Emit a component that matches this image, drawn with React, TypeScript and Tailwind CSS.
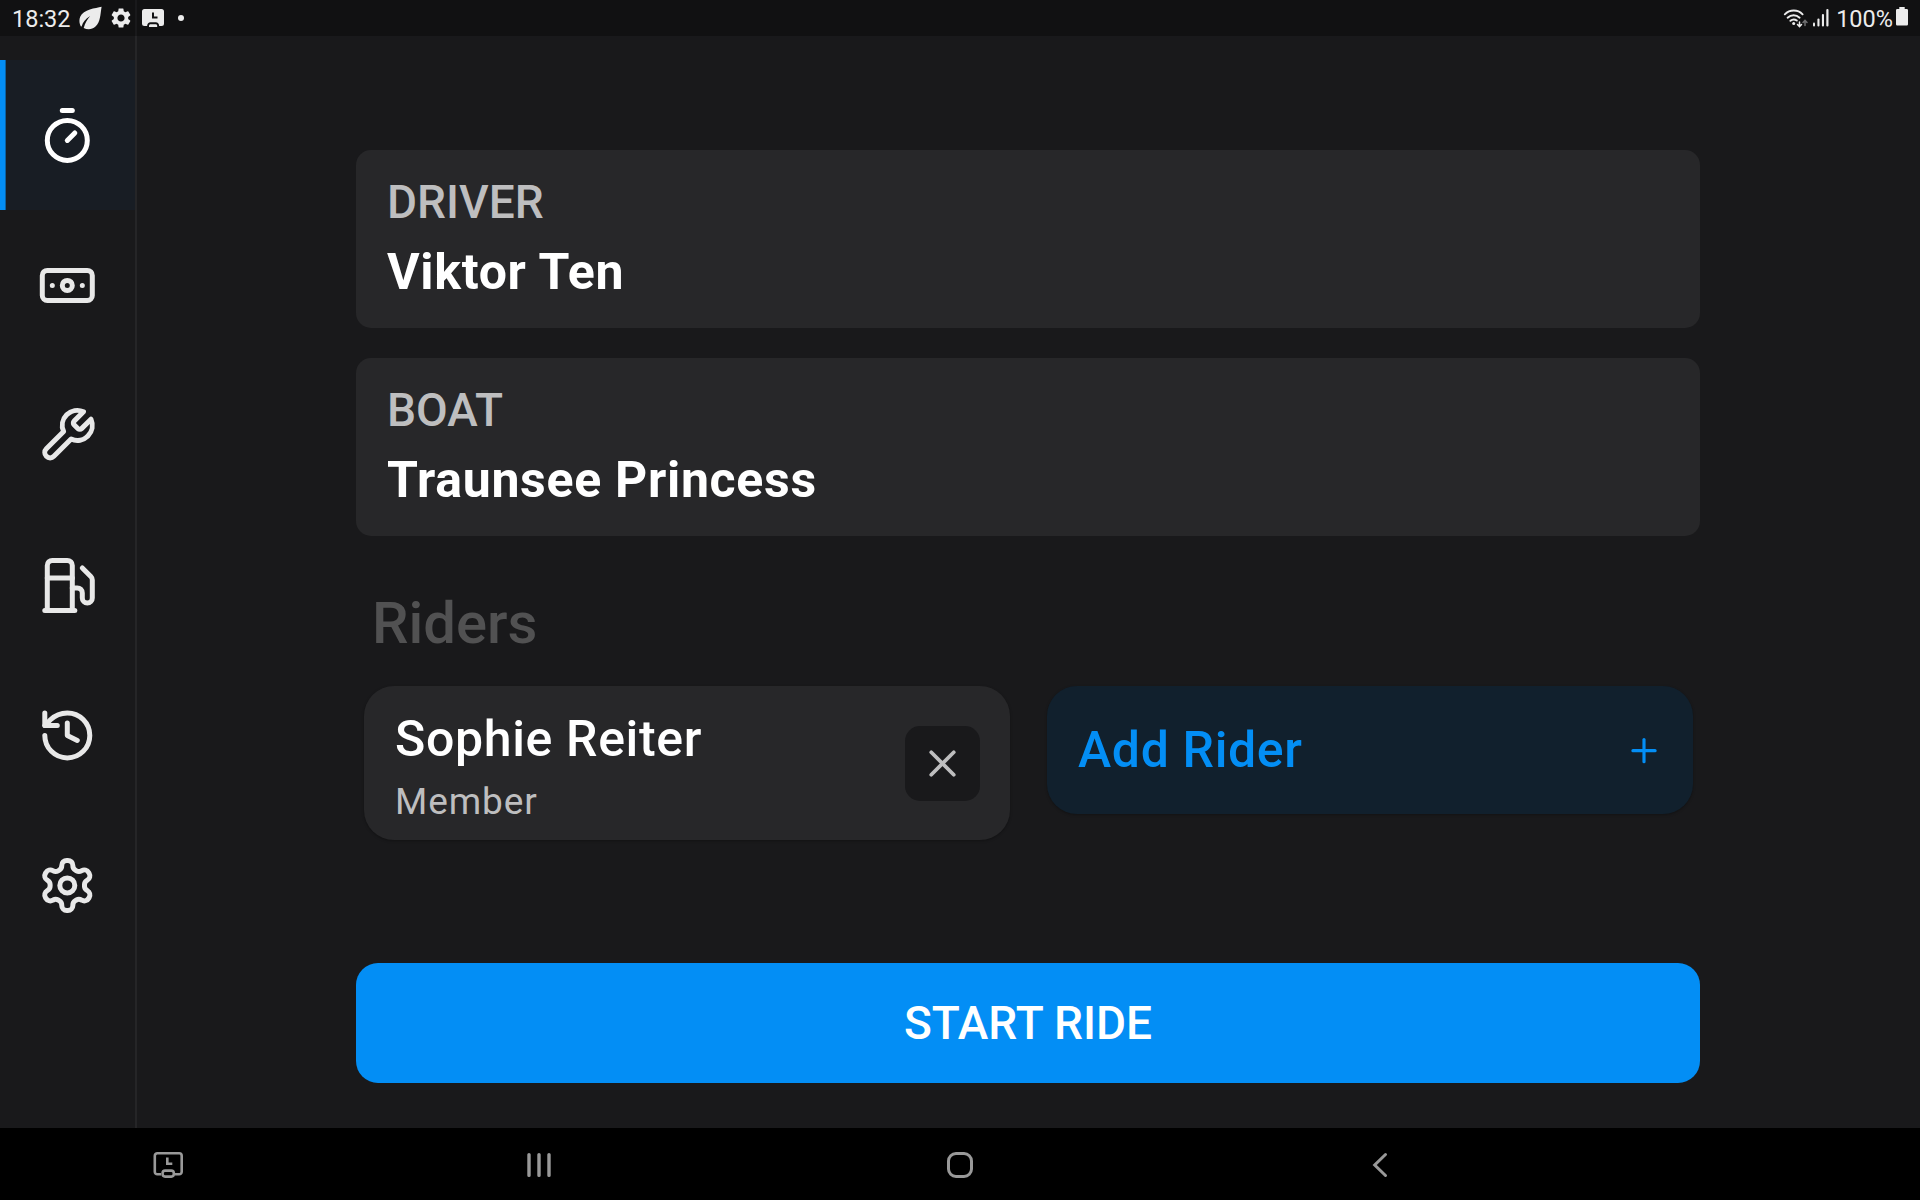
import React from 'react';
import { Banknote, History, Plus, Timer, X } from 'lucide-react';
import { MdSettings } from 'react-icons/md';

interface IconProps {
  className?: string;
}

const strokeProps = {
  viewBox: '0 0 24 24',
  fill: 'none',
  stroke: 'currentColor',
  strokeWidth: 2,
  strokeLinecap: 'round' as const,
  strokeLinejoin: 'round' as const,
};

const WrenchIcon: React.FC<IconProps> = ({ className }) => (
  <svg {...strokeProps} className={className}>
    <path d="M14.7 6.3a1 1 0 0 0 0 1.4l1.6 1.6a1 1 0 0 0 1.4 0l3.77-3.77a6 6 0 0 1-7.94 7.94l-6.91 6.91a2.12 2.12 0 0 1-3-3l6.91-6.91a6 6 0 0 1 7.94-7.94l-3.76 3.76z" />
  </svg>
);

const FuelIcon: React.FC<IconProps> = ({ className }) => (
  <svg {...strokeProps} className={className}>
    <path d="M3 22h12" />
    <path d="M4 9h10" />
    <path d="M14 22V4a2 2 0 0 0-2-2H6a2 2 0 0 0-2 2v18" />
    <path d="M14 13h2a2 2 0 0 1 2 2v2a2 2 0 0 0 2 2 2 2 0 0 0 2-2V9.83a2 2 0 0 0-.59-1.42L18 5" />
  </svg>
);

const GearIcon: React.FC<IconProps> = ({ className }) => (
  <svg {...strokeProps} className={className}>
    <path d="M12.22 2h-.44a2 2 0 0 0-2 2v.18a2 2 0 0 1-1 1.73l-.43.25a2 2 0 0 1-2 0l-.15-.08a2 2 0 0 0-2.73.73l-.22.38a2 2 0 0 0 .73 2.73l.15.1a2 2 0 0 1 1 1.72v.51a2 2 0 0 1-1 1.74l-.15.09a2 2 0 0 0-.73 2.73l.22.38a2 2 0 0 0 2.73.73l.15-.08a2 2 0 0 1 2 0l.43.25a2 2 0 0 1 1 1.73V20a2 2 0 0 0 2 2h.44a2 2 0 0 0 2-2v-.18a2 2 0 0 1 1-1.73l.43-.25a2 2 0 0 1 2 0l.15.08a2 2 0 0 0 2.73-.73l.22-.39a2 2 0 0 0-.73-2.73l-.15-.08a2 2 0 0 1-1-1.74v-.5a2 2 0 0 1 1-1.74l.15-.09a2 2 0 0 0 .73-2.73l-.22-.38a2 2 0 0 0-2.73-.73l-.15.08a2 2 0 0 1-2 0l-.43-.25a2 2 0 0 1-1-1.73V4a2 2 0 0 0-2-2z" />
    <circle cx="12" cy="12" r="3" />
  </svg>
);

const navIcon = 'size-[60px] translate-x-[0.3px] translate-y-[0.4px]';

const navItems = [
  { id: 'ride', icon: <Timer className={navIcon} />, active: true },
  { id: 'payments', icon: <Banknote className={navIcon} /> },
  { id: 'maintenance', icon: <WrenchIcon className={navIcon} /> },
  { id: 'fuel', icon: <FuelIcon className={navIcon} /> },
  { id: 'history', icon: <History className={navIcon} /> },
  { id: 'settings', icon: <GearIcon className={navIcon} /> },
];

const StatusBar = () => (
  <div className="absolute inset-x-0 top-0 flex h-9 items-center bg-black/30 pr-3 pl-3 text-[23.5px] leading-9 text-[#ececec]">
    <span className="w-[67px] pt-[2px]">18:32</span>
    {/* Power saving leaf */}
    <svg viewBox="0 0 24 24" className="size-6 fill-current">
      <path d="M22.6.8C16.5 2.3 4.5 3.2 1.2 10.8c-1.5 3.6-.7 7.6.9 9.9l.7-.7c1-3.6 3.6-7 8.4-10-2.9 3.3-5 6.800-6.500 11.900 3.600 2 8.200 1.900 11.800-1.300C21.500 16.200 21.200 9 22.600.8z" />
    </svg>
    <MdSettings className="ml-[6px] size-6" />
    {/* Screen timeout */}
    <svg viewBox="0 0 24 20" className="ml-2 h-5 w-6">
      <path className="fill-current" d="M3.5 1h17A2.5 2.5 0 0 1 23 3.5v12a2.5 2.5 0 0 1-2.5 2.5h-2.3c-.3-2.4-1.4-3.7-3.4-3.7H9.5c-2 0-3.1 1.3-3.4 3.7H3.5A2.5 2.5 0 0 1 1 15.500v-12A2.5 2.5 0 0 1 3.5 1z" />
      <path className="fill-current" d="M8 19v-1.2c0-1 .6-1.6 1.6-1.6h5c1 0 1.6.6 1.6 1.6V19z" />
      <path d="M12 4.5v5h4.500" fill="none" stroke="#111113" strokeWidth="2" />
    </svg>
    <span className="ml-[13px] size-[6px] rounded-full bg-current" />

    <div className="ml-auto flex items-center">
      <svg viewBox="0 0 26 22" className="h-[22px] w-[26px]" fill="none" stroke="currentColor" strokeLinecap="round">
        <path d="M1.8 7.300c5-5 13-5 17.800 0" strokeWidth="1.9" />
        <path d="M4.6 10.700c3.500-3.300 8.600-3.300 12 0" strokeWidth="1.9" />
        <path d="M7.4 13.800c2-1.700 4.400-1.700 6.400-.2" strokeWidth="1.9" />
        <circle cx="10.7" cy="16.500" r="1.5" fill="currentColor" stroke="none" />
        <path d="M16.5 15v4.500m-2-1.900 2 2.100 2-2.100" strokeWidth="1.5" />
        <path d="M22 18.500v-5m-2 2 2-2.100 2 2.100" stroke="#707072" strokeWidth="1.5" />
      </svg>
      <svg viewBox="0 0 18 20" className="ml-[3px] h-5 w-[18px] fill-current">
        <rect x="1" y="14.5" width="2" height="4" rx="1" />
        <rect x="5.4" y="10.5" width="2.1" height="8" rx="1" />
        <rect x="9.9" y="6" width="2.1" height="12.5" rx="1" />
        <rect x="14.3" y="1" width="2.2" height="17.5" rx="1" />
      </svg>
      <span className="ml-[6px] pt-[2px]">100%</span>
      <svg viewBox="0 0 12 19" className="ml-[3px] mb-[3px] h-[19px] w-3 fill-current">
        <path d="M3.3 0h5.400v2h2.100A1.200 1.200 0 0 1 12 3.200v14.100a1.200 1.200 0 0 1-1.200 1.200H1.200A1.200 1.200 0 0 1 0 17.300V3.200A1.200 1.200 0 0 1 1.200 2h2.100z" />
      </svg>
    </div>
  </div>
);

const Sidebar = () => (
  <nav className="flex w-[137px] shrink-0 flex-col border-r-2 border-[#252527] pt-[60px]">
    {navItems.map((item) => (
      <button
        key={item.id}
        className={
          item.active
            ? 'relative flex h-[150px] items-center justify-center bg-[#181d24] pr-px text-white'
            : 'flex h-[150px] items-center justify-center pr-px text-[#e8e8e8]'
        }
      >
        {item.active && <span className="absolute inset-y-0 left-0 w-[6px] border-r border-[#0a61a4] bg-[#038ef5]" />}
        {item.icon}
      </button>
    ))}
  </nav>
);

interface InfoCardProps {
  label: string;
  value: string;
}

const InfoCard: React.FC<InfoCardProps> = ({ label, value }) => (
  <div className="h-[178px] rounded-[15px] bg-[#272729] px-[31px] pt-[30px]">
    <div className="text-[46px] leading-[45px] font-medium text-[#bebebf]">{label}</div>
    <div className="mt-[17px] text-[50px] leading-[60px] font-bold tracking-[0.7px] text-white">{value}</div>
  </div>
);

const SystemNav = () => (
  <div className="flex h-[72px] items-center bg-black pt-px text-[#999999]">
    <div className="flex w-[336px] justify-center">
      <svg viewBox="0 0 30 26" className="h-[26px] w-[30px]" fill="none" stroke="currentColor" strokeWidth="2.6">
        <path d="M8 22.3H4.300a2.500 2.500 0 0 1-2.500-2.500v-16a2.500 2.500 0 0 1 2.500-2.500h21.900a2.500 2.500 0 0 1 2.500 2.500v16a2.500 2.500 0 0 1-2.500 2.500H22" />
        <rect x="9.6" y="18.6" width="11.2" height="6" rx="2.5" />
        <path d="M14.3 5.500v6.200h5" />
      </svg>
    </div>
    <div className="flex w-[406px] justify-center">
      <svg viewBox="0 0 24 26" className="h-[26px] w-6" stroke="currentColor" strokeWidth="3.4" strokeLinecap="round">
        <path d="M2 2.600v20.800M12 2.600v20.800M22 2.600v20.800" />
      </svg>
    </div>
    <div className="flex w-[436px] justify-center">
      <span className="mt-px size-[26px] rounded-[9px] border-[3px] border-current" />
    </div>
    <div className="flex w-[404px] justify-center">
      <svg viewBox="0 0 16 26" className="h-[26px] w-4" fill="none" stroke="currentColor" strokeWidth="3" strokeLinecap="round">
        <path d="M13.5 2.500 2.700 13l10.800 10.500" />
      </svg>
    </div>
  </div>
);

export default function App() {
  return (
    <div className="relative flex h-[1200px] w-[1920px] flex-col overflow-hidden bg-[#19191b] font-['Roboto',sans-serif]">
      <div className="flex h-[1128px]">
        <Sidebar />

        <main className="flex flex-1 flex-col items-center pt-[150px] pr-px">
          <div className="flex w-[1344px] flex-col">
            <div className="flex flex-col gap-[30px]">
              <InfoCard label="DRIVER" value="Viktor Ten" />
              <InfoCard label="BOAT" value="Traunsee Princess" />
            </div>

            <h2 className="mt-[52px] pl-4 text-[58px] leading-[70px] font-medium text-[#515152]">Riders</h2>

            <div className="mt-7 flex items-start justify-between pr-[7px] pl-2">
              <div className="flex h-[154px] w-[646px] items-center justify-between rounded-[30px] bg-[#272729] px-[30px] shadow-[0_1px_3px_rgba(0,0,0,0.3)]">
                <div className="self-start pt-[23px] pl-px">
                  <div className="text-[50px] leading-[60px] font-medium tracking-[0.65px] text-white">Sophie Reiter</div>
                  <div className="mt-3 text-[37px] leading-[42px] tracking-[0.9px] text-[#bebebf]">Member</div>
                </div>
                <button className="flex size-[75px] items-center justify-center rounded-[15px] bg-[#19191b] text-[#bebebf]">
                  <X className="size-[45px]" />
                </button>
              </div>

              <button className="flex h-[128px] w-[646px] items-center justify-between rounded-[30px] bg-[#11202d] pr-[30px] pl-[31px] text-[#038ef5] shadow-[0_1px_3px_rgba(0,0,0,0.3)]">
                <span className="text-[50px] leading-[60px] font-medium tracking-[0.65px]">Add Rider</span>
                <Plus className="size-[38px] translate-y-[0.7px]" />
              </button>
            </div>

            <button className="mt-[123px] flex h-[120px] items-center justify-center rounded-[22px] bg-[#038ef5] text-[46px] font-medium text-white">
              START RIDE
            </button>
          </div>
        </main>
      </div>

      <SystemNav />
      <StatusBar />
    </div>
  );
}
